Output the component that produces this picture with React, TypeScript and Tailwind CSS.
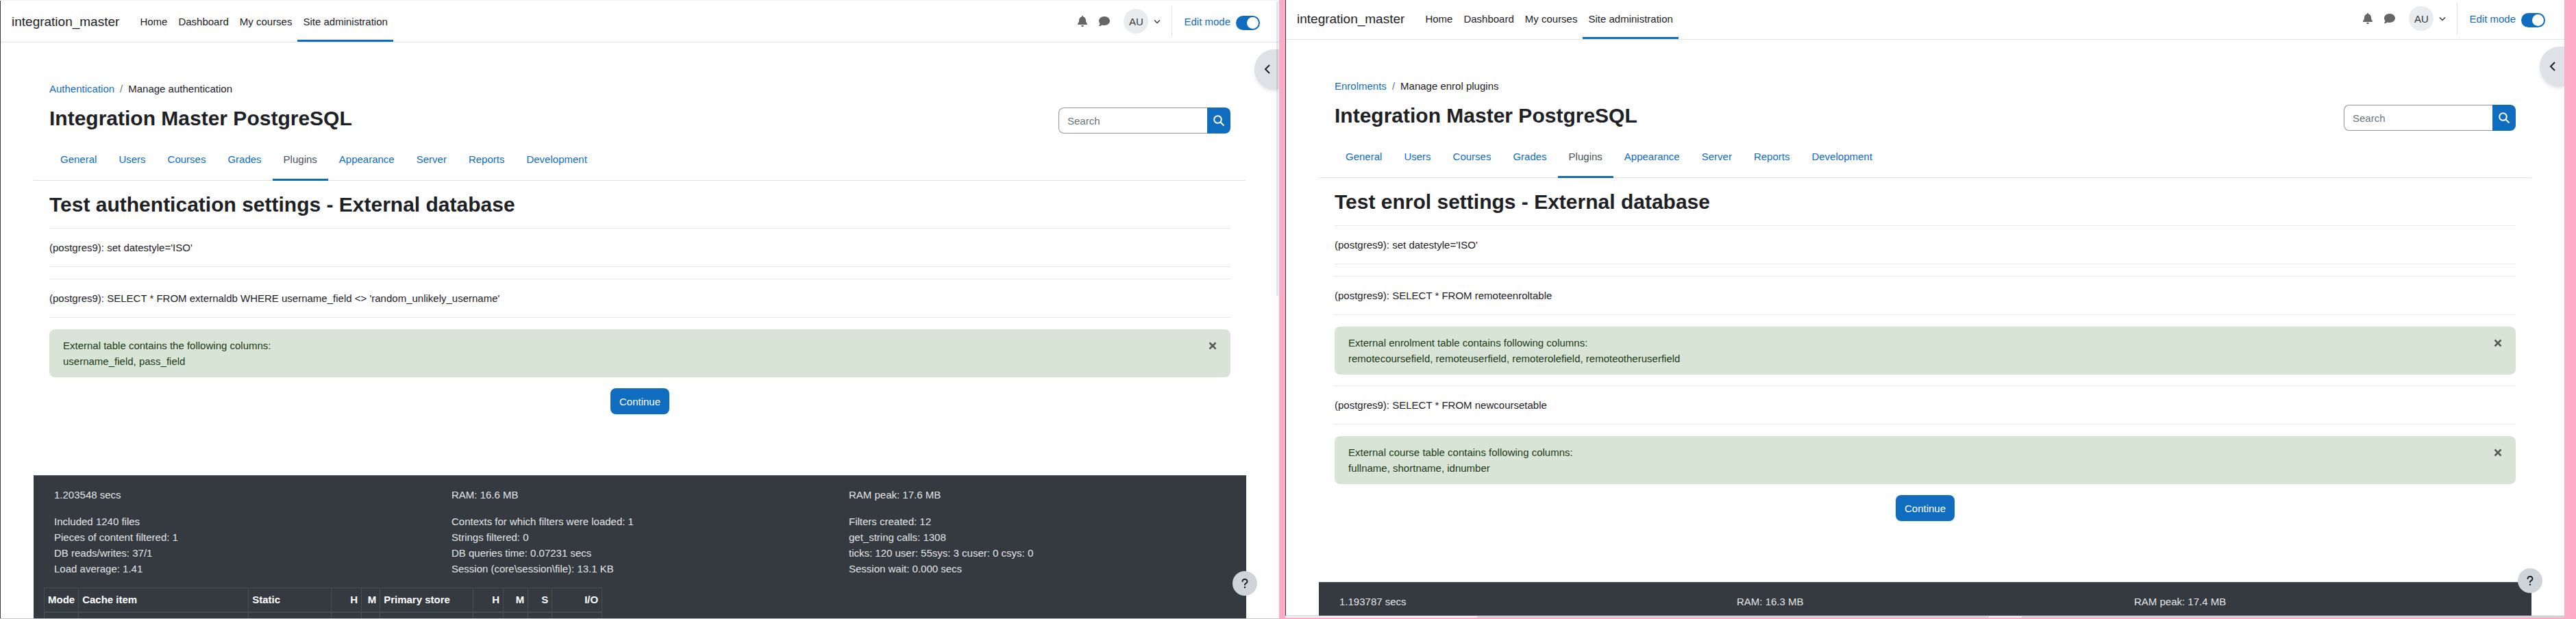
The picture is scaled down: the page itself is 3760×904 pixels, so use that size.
import { FaBell, FaComment, FaQuestion } from 'react-icons/fa6';

interface Notice {
  title: string;
  columns: string;
}

interface Step {
  sql: string;
  notice?: Notice;
}

interface PanelProps {
  id: string;
  parent: string;
  current: string;
  heading: string;
  steps: Step[];
  stats: string[];
  details?: string[][];
  showCache?: boolean;
}

const navItems = ['Home', 'Dashboard', 'My courses', 'Site administration'];
const tabs = ['General', 'Users', 'Courses', 'Grades', 'Plugins', 'Appearance', 'Server', 'Reports', 'Development'];

const cacheColumns = [
  { label: 'Mode', className: 'w-[50px] text-left' },
  { label: 'Cache item', className: 'w-[248px] text-left' },
  { label: 'Static', className: 'w-[121px] text-left' },
  { label: 'H', className: 'w-[44px] text-right' },
  { label: 'M', className: 'w-[27px] text-right' },
  { label: 'Primary store', className: 'w-[136px] text-left' },
  { label: 'H', className: 'w-[44px] text-right' },
  { label: 'M', className: 'w-[36px] text-right' },
  { label: 'S', className: 'w-[35px] text-right' },
  { label: 'I/O', className: 'w-[73px] text-right' },
];

function TopBar({ id }: { id: string }) {
  return (
    <header className="flex h-[61px] shrink-0 items-stretch border-b border-[#e3e3e4] pr-7 pl-4">
      <a href="#" className="mr-[22px] flex items-center text-[19px]">integration_master</a>
      <nav className="flex">
        {navItems.map(item => (
          <a
            key={item}
            href="#"
            className={`flex items-center border-y-3 border-t-transparent px-2 ${
              item === 'Site administration' ? 'border-b-[#0f6cbf]' : 'border-b-transparent'
            }`}
          >
            {item}
          </a>
        ))}
      </nav>
      <div className="ml-auto flex items-center">
        <button aria-label="Notifications" className="mr-4 text-[#666]">
          <FaBell size={16} />
        </button>
        <button aria-label="Messages" className="text-[#666]">
          <FaComment size={16} />
        </button>
        <button aria-label="User menu" className="ml-5 flex items-center gap-2">
          <span className="flex h-9 w-9 items-center justify-center rounded-full bg-[#e9ecef] text-[#343a40]">AU</span>
          <svg width="10" height="10" viewBox="0 0 10 10" fill="none" stroke="#343a40" strokeWidth="1.5">
            <path d="M1 3.5l4 4 4-4" />
          </svg>
        </button>
        <div className="ml-4 h-[46px] border-l border-[#dee2e6]" />
        <label htmlFor={`${id}-edit`} className="ml-[17px] text-[#0f6cbf]">Edit mode</label>
        <input
          id={`${id}-edit`}
          type="checkbox"
          role="switch"
          defaultChecked
          className="peer sr-only"
        />
        <label
          htmlFor={`${id}-edit`}
          aria-hidden="true"
          className="mt-1 ml-2 flex h-[21px] w-[35px] items-center justify-end rounded-full bg-[#0f6cbf] px-[2px]"
        >
          <span className="h-[17px] w-[17px] rounded-full bg-white" />
        </label>
      </div>
    </header>
  );
}

function Alert({ title, columns }: Notice) {
  return (
    <div role="alert" className="mb-4 flex items-start justify-between rounded-lg bg-[#d8e4d6] px-5 py-3 text-[#1c3b18]">
      <p>
        {title}
        <br />
        {columns}
      </p>
      <button aria-label="Dismiss" className="mt-1.5">
        <svg width="12" height="12" viewBox="0 0 12 12" stroke="#565b55" strokeWidth="2.6" fill="none">
          <path d="M1.5 1.5l9 9M10.5 1.5l-9 9" />
        </svg>
      </button>
    </div>
  );
}

function CacheTable() {
  return (
    <table className="ml-[15px] table-fixed border-collapse border border-[#454d55] text-white">
      <thead>
        <tr className="border-b-2 border-[#454d55]">
          {cacheColumns.map((col, i) => (
            <th key={i} className={`h-[35px] border-x border-[#454d55] px-[5px] font-bold whitespace-nowrap ${col.className}`}>
              {col.label}
            </th>
          ))}
        </tr>
      </thead>
      <tbody>
        <tr>
          {cacheColumns.map((_, i) => (
            <td key={i} className="h-8 border-x border-[#454d55]" />
          ))}
        </tr>
      </tbody>
    </table>
  );
}

function Panel({ id, parent, current, heading, steps, stats, details, showCache }: PanelProps) {
  return (
    <section className="relative flex min-h-0 flex-1 flex-col overflow-hidden border-l border-[#3a3a3e] bg-white">
      <TopBar id={id} />

      <button
        aria-label="Open block drawer"
        className="absolute top-[71px] right-0 flex h-[58px] w-9 items-center rounded-l-full bg-[#dee2e6] pl-[14px] shadow-md"
      >
        <svg width="10" height="14" viewBox="0 0 10 14" fill="none" stroke="#1d2125" strokeWidth="2">
          <path d="M8 1L2 7l6 6" />
        </svg>
      </button>

      <main className="px-12 pt-[56px]">
        <div className="px-[23px]">
          <nav aria-label="Breadcrumb" className="flex gap-2">
            <a href="#" className="text-[#0f6cbf]">{parent}</a>
            <span className="text-[#6a737b]">/</span>
            <span>{current}</span>
          </nav>
          <div className="mt-[14px] flex items-start justify-between">
            <h1 className="text-[30px] leading-9 font-bold">Integration Master PostgreSQL</h1>
            <form className="mt-0.5 flex h-[38px]">
              <input
                type="text"
                aria-label="Search"
                placeholder="Search"
                className="w-[217px] rounded-l-lg border border-r-0 border-[#8f959e] px-3 placeholder:text-[#6a737b]"
              />
              <button type="button" aria-label="Submit search" className="flex w-[34px] items-center justify-center rounded-r-lg bg-[#0f6cbf]">
                <svg width="16" height="16" viewBox="0 0 16 16" fill="none" stroke="white" strokeWidth="2">
                  <circle cx="6.5" cy="6.5" r="5.3" />
                  <path d="M10.5 10.5l5 5" />
                </svg>
              </button>
            </form>
          </div>
        </div>

        <nav className="mt-3 flex h-[57px] border-b border-[#dee2e6] pl-[23px]">
          {tabs.map(tab => (
            <a
              key={tab}
              href="#"
              className={`-mb-px flex items-center border-b-3 px-4 pb-1 ${
                tab === 'Plugins' ? 'border-[#0f6cbf] text-[#495057]' : 'border-transparent text-[#0f6cbf]'
              }`}
            >
              {tab}
            </a>
          ))}
        </nav>

        <div className="px-[23px]">
          <h2 className="mt-[17px] mb-4 text-[30px] leading-9 font-bold">{heading}</h2>
          {steps.map(step => (
            <div key={step.sql}>
              <div className="mb-[17px] border-y border-[#e6e7e8] py-4">{step.sql}</div>
              {step.notice && <Alert {...step.notice} />}
            </div>
          ))}
          <div className="flex justify-center">
            <button className="h-[38px] rounded-lg bg-[#0f6cbf] px-[13px] text-white">Continue</button>
          </div>
        </div>

        <footer className="mt-[89px] h-96 border-t border-[#495057] bg-[#343a40] pt-4 text-[#e3e5e7]">
          <div className="grid grid-cols-3 pl-[30px]">
            {stats.map(stat => <p key={stat}>{stat}</p>)}
          </div>
          {details && (
            <div className="mt-4 grid grid-cols-3 pl-[30px]">
              {details.map(list => (
                <ul key={list[0]}>
                  {list.map(line => <li key={line}>{line}</li>)}
                </ul>
              ))}
            </div>
          )}
          {showCache && <div className="mt-4"><CacheTable /></div>}
        </footer>
      </main>

      <button
        aria-label="Help"
        className="absolute right-8 bottom-[33px] flex h-9 w-9 items-center justify-center rounded-full bg-[#ced4da] text-[#1d2125]"
      >
        <FaQuestion size={16} />
      </button>
    </section>
  );
}

export default function App() {
  return (
    <div className="flex h-screen overflow-hidden bg-[#ffabc8] font-['Liberation_Sans',Arial,sans-serif] text-[15px] leading-[23px] text-[#1d2125]">
      <div className="relative flex min-w-0 flex-1 flex-col border-t border-[#f3f3f3]">
        <Panel
          id="auth"
          parent="Authentication"
          current="Manage authentication"
          heading="Test authentication settings - External database"
          steps={[
            { sql: "(postgres9): set datestyle='ISO'" },
            {
              sql: "(postgres9): SELECT * FROM externaldb WHERE username_field <> 'random_unlikely_username'",
              notice: { title: 'External table contains the following columns:', columns: 'username_field, pass_field' },
            },
          ]}
          stats={['1.203548 secs', 'RAM: 16.6 MB', 'RAM peak: 17.6 MB']}
          details={[
            ['Included 1240 files', 'Pieces of content filtered: 1', 'DB reads/writes: 37/1', 'Load average: 1.41'],
            ['Contexts for which filters were loaded: 1', 'Strings filtered: 0', 'DB queries time: 0.07231 secs', 'Session (core\\session\\file): 13.1 KB'],
            ['Filters created: 12', 'get_string calls: 1308', 'ticks: 120 user: 55sys: 3 cuser: 0 csys: 0', 'Session wait: 0.000 secs'],
          ]}
          showCache
        />
        <div className="h-px bg-[#c9c9c9]" />
        {/* overlay scrollbar */}
        <div className="absolute top-px right-px h-[430px] w-[3px] bg-black/10" />
      </div>
      <div className="w-[9px]" />
      {/* second window is scrolled a few pixels down */}
      <div className="-mt-[3px] mr-[17px] mb-[2px] flex min-w-0 flex-1 flex-col">
        <Panel
          id="enrol"
          parent="Enrolments"
          current="Manage enrol plugins"
          heading="Test enrol settings - External database"
          steps={[
            { sql: "(postgres9): set datestyle='ISO'" },
            {
              sql: '(postgres9): SELECT * FROM remoteenroltable',
              notice: {
                title: 'External enrolment table contains following columns:',
                columns: 'remotecoursefield, remoteuserfield, remoterolefield, remoteotheruserfield',
              },
            },
            {
              sql: '(postgres9): SELECT * FROM newcoursetable',
              notice: { title: 'External course table contains following columns:', columns: 'fullname, shortname, idnumber' },
            },
          ]}
          stats={['1.193787 secs', 'RAM: 16.3 MB', 'RAM peak: 17.4 MB']}
        />
        <div className="flex h-[3px] border-t border-[#c9c9c9] bg-[#d5d5d5]">
          <div className="w-[15%] bg-white" />
          <div className="ml-[40%] w-12 bg-[#f3f3f3]" />
        </div>
      </div>
    </div>
  );
}
